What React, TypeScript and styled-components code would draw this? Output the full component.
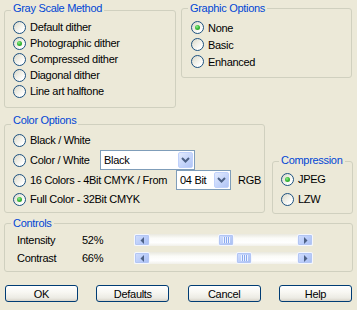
import React from "react";
import styled, { createGlobalStyle, css } from "styled-components";

const Global = createGlobalStyle`
  html, body { margin: 0; padding: 0; background: #ECE9D8; }
  body {
    font-family: "Liberation Sans", Arial, sans-serif;
    font-size: 11px;
    letter-spacing: -0.3px;
    color: #000;
  }
`;

const Dialog = styled.div`
  width: 357px;
  height: 310px;
  box-sizing: border-box;
  padding: 0 4px 0 4px;
  display: flex;
  flex-direction: column;
  background: #ECE9D8;
  overflow: hidden;
`;

const Row = styled.div<{ $gap: number; $top?: number }>`
  display: flex;
  align-items: flex-start;
  gap: ${(p) => p.$gap}px;
  margin-top: ${(p) => p.$top ?? 0}px;
`;

const Group = styled.div<{ $w: number; $h: number; $top?: number }>`
  position: relative;
  box-sizing: border-box;
  flex: none;
  width: ${(p) => p.$w}px;
  height: ${(p) => p.$h}px;
  margin-top: ${(p) => p.$top ?? 0}px;
  border: 1px solid #d0d0bf;
  border-radius: 3px;
`;

const Caption = styled.span<{ $top: number }>`
  position: absolute;
  top: ${(p) => p.$top}px;
  left: 6px;
  padding: 0 2px;
  line-height: 14px;
  background: #ece9d8;
  color: #0046d5;
  white-space: nowrap;
`;

const OptionList = styled.div<{ $top: number; $left: number }>`
  display: flex;
  flex-direction: column;
  padding-top: ${(p) => p.$top}px;
  padding-left: ${(p) => p.$left}px;
`;

const Option = styled.div<{ $h?: number; $w?: number; $mt?: number }>`
  display: flex;
  align-items: center;
  gap: 4px;
  flex: none;
  height: ${(p) => p.$h ?? 16}px;
  width: ${(p) => (p.$w ? `${p.$w}px` : "auto")};
  margin-top: ${(p) => p.$mt ?? 0}px;
  white-space: nowrap;
`;

const RadioCircle = styled.span<{ $checked?: boolean }>`
  position: relative;
  flex: none;
  width: 13px;
  height: 13px;
  box-sizing: border-box;
  border-radius: 50%;
  border: 1px solid #1c5180;
  background: linear-gradient(135deg, #d8d6c8 0%, #eeede4 40%, #ffffff 80%);
  ${(p) =>
    p.$checked &&
    css`
      &::after {
        content: "";
        position: absolute;
        left: 3px;
        top: 3px;
        width: 5px;
        height: 5px;
        border-radius: 50%;
        background: radial-gradient(circle at 40% 35%, #8ff08f 0%, #3cba3c 45%, #1a8f1a 100%);
      }
    `}
`;

const ColorRow = styled.div<{ $h: number; $mt?: number }>`
  display: flex;
  align-items: center;
  height: ${(p) => p.$h}px;
  margin-top: ${(p) => p.$mt ?? 0}px;
`;

const Combo = styled.div<{ $w: number; $h: number }>`
  display: flex;
  align-items: stretch;
  box-sizing: border-box;
  flex: none;
  width: ${(p) => p.$w}px;
  height: ${(p) => p.$h}px;
  padding: 1px;
  border: 1px solid #7f9db9;
  background: #fff;
`;

const ComboText = styled.span`
  flex: 1;
  display: flex;
  align-items: center;
  padding-left: 2px;
`;

const ComboButton = styled.span`
  flex: none;
  width: 15px;
  box-sizing: border-box;
  border: 1px solid #c0d1fb;
  border-radius: 2px;
  background: linear-gradient(135deg, #e3ebfd 0%, #c8d7fb 50%, #b0c4f4 100%);
  display: flex;
  align-items: center;
  justify-content: center;
`;

const SideText = styled.span`
  margin-left: 7px;
`;

const ControlRow = styled.div`
  display: flex;
  align-items: center;
  height: 18px;
`;

const ControlLabel = styled.span<{ $w: number }>`
  flex: none;
  width: ${(p) => p.$w}px;
`;

const ScrollBar = styled.div`
  display: flex;
  flex: none;
  width: 179px;
  height: 12px;
  background: linear-gradient(#e9e8df 0%, #fbfbf8 35%, #ffffff 70%, #f1f0ea 100%);
`;

const ScrollPart = css`
  flex: none;
  box-sizing: border-box;
  width: 16px;
  height: 12px;
  border: 1px solid #f4f7fe;
  border-radius: 2px;
  background: linear-gradient(135deg, #d3dffc 0%, #bccefa 50%, #a8bef2 100%);
  box-shadow: inset 0 0 0 1px #b3c6f4;
  display: flex;
  align-items: center;
  justify-content: center;
`;

const ScrollButton = styled.span`
  ${ScrollPart}
`;

const Track = styled.div`
  flex: 1;
  display: flex;
`;

const Thumb = styled.span`
  ${ScrollPart}
`;

const Grip = styled.span`
  width: 7px;
  height: 6px;
  background: repeating-linear-gradient(to right, #eef3fe 0 1px, #8aa9ee 1px 2px);
`;

const ButtonRow = styled.div`
  display: flex;
  justify-content: space-between;
  margin: 13px 1px 0 1px;
`;

const PushButton = styled.button`
  box-sizing: border-box;
  width: 73px;
  height: 17px;
  padding: 0;
  border: 1px solid #003c74;
  border-radius: 3px;
  background: linear-gradient(#ffffff 0%, #f7f6f1 45%, #ecebe4 80%, #d8d3c8 100%);
  font-family: "Liberation Sans", Arial, sans-serif;
  font-size: 11px;
  letter-spacing: -0.3px;
  line-height: 14px;
  color: #000;
`;

const Chevron = () => (
  <svg width="9" height="6" viewBox="0 0 9 6">
    <path d="M1 1 L4.5 4.5 L8 1" fill="none" stroke="#4d6185" strokeWidth="2" />
  </svg>
);

const Arrow = ({ dir }: { dir: "left" | "right" }) => (
  <svg width="5" height="7" viewBox="0 0 5 7">
    <path d={dir === "left" ? "M4 0 L0.5 3.5 L4 7 Z" : "M1 0 L4.5 3.5 L1 7 Z"} fill="#4d6185" />
  </svg>
);

const Radio = ({ label, checked }: { label: string; checked?: boolean }) => (
  <>
    <RadioCircle $checked={checked} />
    <span>{label}</span>
  </>
);

const Slider = ({ value }: { value: number }) => (
  <ScrollBar>
    <ScrollButton>
      <Arrow dir="left" />
    </ScrollButton>
    <Track>
      <Thumb style={{ marginLeft: `calc((100% - 16px) * ${value / 100})` }}>
        <Grip />
      </Thumb>
    </Track>
    <ScrollButton>
      <Arrow dir="right" />
    </ScrollButton>
  </ScrollBar>
);

const grayOptions = ["Default dither", "Photographic dither", "Compressed dither", "Diagonal dither", "Line art halftone"];
const graphicOptions = ["None", "Basic", "Enhanced"];

export default function App() {
  return (
    <>
      <Global />
      <Dialog>
        <Row $gap={5}>
          <Group $w={172} $h={98} $top={10}>
            <Caption $top={-10}>Gray Scale Method</Caption>
            <OptionList $top={8} $left={8}>
              {grayOptions.map((o, i) => (
                <Option key={o} $h={16}>
                  <Radio label={o} checked={i === 1} />
                </Option>
              ))}
            </OptionList>
          </Group>
          <Group $w={171} $h={70} $top={8}>
            <Caption $top={-8}>Graphic Options</Caption>
            <OptionList $top={10} $left={9}>
              {graphicOptions.map((o, i) => (
                <Option key={o} $h={17}>
                  <Radio label={o} checked={i === 0} />
                </Option>
              ))}
            </OptionList>
          </Group>
        </Row>

        <Row $gap={7}>
          <Group $w={261} $h={89} $top={16}>
            <Caption $top={-12}>Color Options</Caption>
            <OptionList $top={7} $left={8}>
              <ColorRow $h={16}>
                <Option>
                  <Radio label="Black / White" />
                </Option>
              </ColorRow>
              <ColorRow $h={20} $mt={2}>
                <Option $w={87}>
                  <Radio label="Color / White" />
                </Option>
                <Combo $w={95} $h={20}>
                  <ComboText>Black</ComboText>
                  <ComboButton>
                    <Chevron />
                  </ComboButton>
                </Combo>
              </ColorRow>
              <ColorRow $h={20}>
                <Option $w={163}>
                  <Radio label="16 Colors - 4Bit CMYK / From" />
                </Option>
                <Combo $w={55} $h={20}>
                  <ComboText>04 Bit</ComboText>
                  <ComboButton>
                    <Chevron />
                  </ComboButton>
                </Combo>
                <SideText>RGB</SideText>
              </ColorRow>
              <ColorRow $h={16} $mt={1}>
                <Option>
                  <Radio label="Full Color - 32Bit CMYK" checked />
                </Option>
              </ColorRow>
            </OptionList>
          </Group>
          <Group $w={81} $h={53} $top={53}>
            <Caption $top={-9}>Compression</Caption>
            <OptionList $top={7} $left={8}>
              <Option $h={20}>
                <Radio label="JPEG" checked />
              </Option>
              <Option $h={20}>
                <Radio label="LZW" />
              </Option>
            </OptionList>
          </Group>
        </Row>

        <Group $w={349} $h={49} $top={9}>
          <Caption $top={-8}>Controls</Caption>
          <OptionList $top={7} $left={12}>
            <ControlRow>
              <ControlLabel $w={65}>Intensity</ControlLabel>
              <ControlLabel $w={52}>52%</ControlLabel>
              <Slider value={52} />
            </ControlRow>
            <ControlRow>
              <ControlLabel $w={65}>Contrast</ControlLabel>
              <ControlLabel $w={52}>66%</ControlLabel>
              <Slider value={66} />
            </ControlRow>
          </OptionList>
        </Group>

        <ButtonRow>
          <PushButton>OK</PushButton>
          <PushButton>Defaults</PushButton>
          <PushButton>Cancel</PushButton>
          <PushButton>Help</PushButton>
        </ButtonRow>
      </Dialog>
    </>
  );
}
